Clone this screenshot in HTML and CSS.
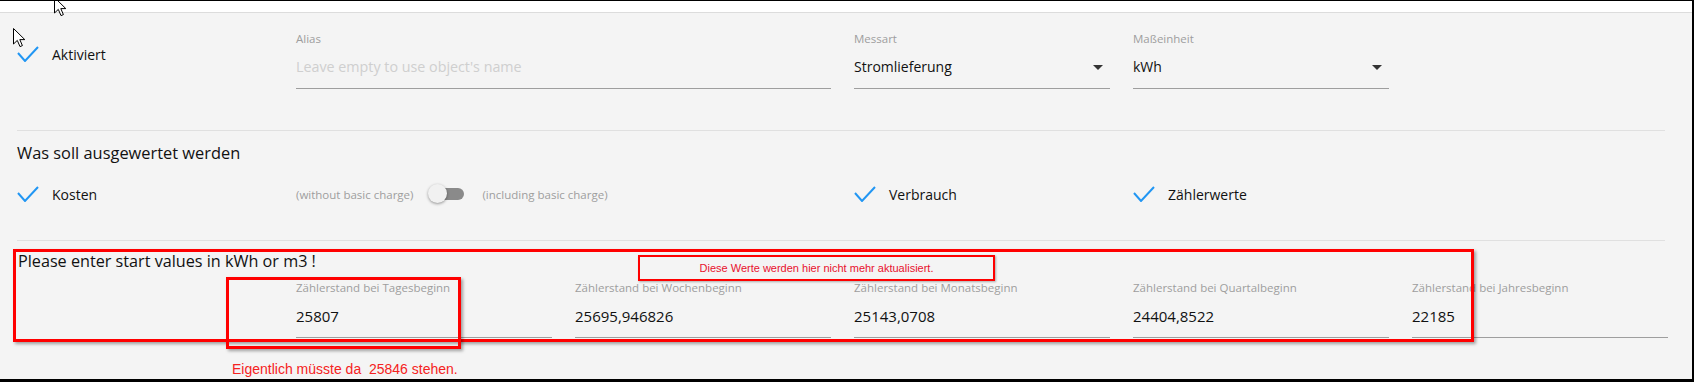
FILE: index.html
```html
<!DOCTYPE html>
<html lang="de">

<head>
    <meta charset="UTF-8">
    <meta name="viewport" content="width=device-width, initial-scale=1.0">
    <title>Zähler Einstellungen</title>
    <link rel="stylesheet" href="styles.css">
</head>

<body>
    <div class="screen">
        <div class="topbar"></div>
        <div class="panel">
            <div class="grid row-top">
                <div class="check">
                    <svg class="tick" viewBox="0 0 22 16"><polyline points="1,7 8,15 21,1" /></svg>
                    <span>Aktiviert</span>
                </div>
                <div class="field span2">
                    <div class="field-label">Alias</div>
                    <div class="field-input placeholder">Leave empty to use object's name</div>
                </div>
                <div class="field">
                    <div class="field-label">Messart</div>
                    <div class="field-input select">Stromlieferung<span class="caret"></span></div>
                </div>
                <div class="field">
                    <div class="field-label">Maßeinheit</div>
                    <div class="field-input select">kWh<span class="caret"></span></div>
                </div>
            </div>

            <div class="divider"></div>
            <div class="section-title">Was soll ausgewertet werden</div>

            <div class="grid row-options">
                <div class="check">
                    <svg class="tick" viewBox="0 0 22 16"><polyline points="1,7 8,15 21,1" /></svg>
                    <span>Kosten</span>
                </div>
                <div class="switch span2">
                    <span>(without basic charge)</span>
                    <span class="lever"></span>
                    <span>(including basic charge)</span>
                </div>
                <div class="check">
                    <svg class="tick" viewBox="0 0 22 16"><polyline points="1,7 8,15 21,1" /></svg>
                    <span>Verbrauch</span>
                </div>
                <div class="check">
                    <svg class="tick" viewBox="0 0 22 16"><polyline points="1,7 8,15 21,1" /></svg>
                    <span>Zählerwerte</span>
                </div>
            </div>

            <div class="divider lower"></div>
            <div class="section-title start">Please enter start values in kWh or m3 !</div>

            <div class="grid row-values">
                <div class="field col2">
                    <div class="field-label">Zählerstand bei Tagesbeginn</div>
                    <div class="field-input number">25807</div>
                </div>
                <div class="field">
                    <div class="field-label">Zählerstand bei Wochenbeginn</div>
                    <div class="field-input number">25695,946826</div>
                </div>
                <div class="field">
                    <div class="field-label">Zählerstand bei Monatsbeginn</div>
                    <div class="field-input number">25143,0708</div>
                </div>
                <div class="field">
                    <div class="field-label">Zählerstand bei Quartalbeginn</div>
                    <div class="field-input number">24404,8522</div>
                </div>
                <div class="field">
                    <div class="field-label">Zählerstand bei Jahresbeginn</div>
                    <div class="field-input number">22185</div>
                </div>
            </div>
        </div>

        <!-- annotations drawn over the screenshot -->
        <div class="mark mark-all"></div>
        <div class="mark mark-day"></div>
        <div class="note">Diese Werte werden hier nicht mehr aktualisiert.</div>
        <div class="note-text">Eigentlich müsste da  25846 stehen.</div>

        <svg class="cursor cursor-a" viewBox="0 0 13 20"><path d="M0.5,0.5 L0.5,16 L4.3,12.4 L7,18.6 L9.4,17.6 L6.8,11.6 L11.8,11.6 Z" /></svg>
        <svg class="cursor cursor-b" viewBox="0 0 13 20"><path d="M0.5,0.5 L0.5,16 L4.3,12.4 L7,18.6 L9.4,17.6 L6.8,11.6 L11.8,11.6 Z" /></svg>
    </div>
</body>

</html>
```

FILE: styles.css
```css
body {
    margin: 0;
    font-family: "Open Sans", "Noto Sans", sans-serif;
    color: #111;
}

.screen {
    position: relative;
    width: 1694px;
    height: 382px;
    box-sizing: border-box;
    border-top: 1px solid #000;
    border-right: 2px solid #000;
    border-bottom: 3px solid #000;
    background: #f4f4f4;
    overflow: hidden;
}

.topbar {
    height: 11px;
    background: #fff;
    border-bottom: 1px solid #dcdcdc;
}

.grid {
    display: grid;
    grid-template-columns: repeat(6, 256px);
    column-gap: 23px;
    padding-left: 17px;
}

.span2 {
    grid-column: span 2;
}

.col2 {
    grid-column: 2;
}

.row-top {
    padding-top: 19px;
}

.check {
    display: flex;
    align-items: center;
    gap: 13px;
    height: 22px;
    font-size: 14px;
}

.row-top .check {
    margin-top: 11px;
}

.tick {
    width: 22px;
    height: 16px;
    flex: none;
}

.tick polyline {
    fill: none;
    stroke: #2196f3;
    stroke-width: 2;
}

.field {
    border-bottom: 1px solid #9e9e9e;
    padding-bottom: 11px;
}

.field-label {
    font-size: 11.5px;
    line-height: 14px;
    color: #9e9e9e;
}

.field-input {
    margin-top: 11px;
    font-size: 14px;
    line-height: 20px;
    color: #111;
}

.field-input.number {
    font-size: 15px;
}

.placeholder {
    font-size: 14.3px;
    color: #cfcfcf;
}

.select {
    display: flex;
    justify-content: space-between;
    align-items: center;
}

.caret {
    width: 0;
    height: 0;
    margin-right: 7px;
    border-left: 5px solid transparent;
    border-right: 5px solid transparent;
    border-top: 5px solid #333;
}

.divider {
    height: 1px;
    background: #e0e0e0;
    margin: 41px 27px 0 17px;
}

.divider.lower {
    margin-top: 35px;
}

.section-title {
    margin: 11px 0 0 17px;
    font-size: 16.4px;
    line-height: 22px;
}

.row-options {
    margin-top: 19px;
}

.switch {
    display: flex;
    align-items: center;
    gap: 18px;
    height: 22px;
    font-size: 11.5px;
    color: #9e9e9e;
}

.lever {
    position: relative;
    width: 33px;
    height: 12px;
    border-radius: 6px;
    background: #8a8a8a;
}

.lever::after {
    content: "";
    position: absolute;
    left: -3px;
    top: -4px;
    width: 19px;
    height: 19px;
    border-radius: 50%;
    background: #f1f1f1;
    box-shadow: 0 1px 3px rgba(0, 0, 0, 0.4);
}

.section-title.start {
    margin-top: 9px;
    margin-left: 18px;
    font-size: 16.2px;
}

.row-values {
    margin-top: 9px;
}

.mark {
    position: absolute;
    border: 3px solid #f00;
    box-shadow: 2px 2px 3px rgba(0, 0, 0, 0.35);
}

.mark-all {
    left: 13px;
    top: 248px;
    width: 1455px;
    height: 87px;
}

.mark-day {
    left: 226px;
    top: 276px;
    width: 229px;
    height: 66px;
}

.note {
    position: absolute;
    left: 638px;
    top: 254px;
    width: 353px;
    height: 22px;
    border: 2px solid #f00;
    box-shadow: 1px 1px 2px rgba(0, 0, 0, 0.3);
    font-family: "Liberation Sans", Arial, sans-serif;
    font-size: 11px;
    line-height: 22px;
    text-align: center;
    color: #e8112d;
}

.note-text {
    position: absolute;
    left: 232px;
    top: 359px;
    font-family: "Liberation Sans", Arial, sans-serif;
    font-size: 14px;
    line-height: 18px;
    white-space: pre;
    color: #f52222;
}

.cursor {
    position: absolute;
    width: 13px;
    height: 20px;
}

.cursor path {
    fill: #fff;
    stroke: #000;
    stroke-width: 1;
}

.cursor-a {
    left: 54px;
    top: -4px;
}

.cursor-b {
    left: 13px;
    top: 27px;
}
```
